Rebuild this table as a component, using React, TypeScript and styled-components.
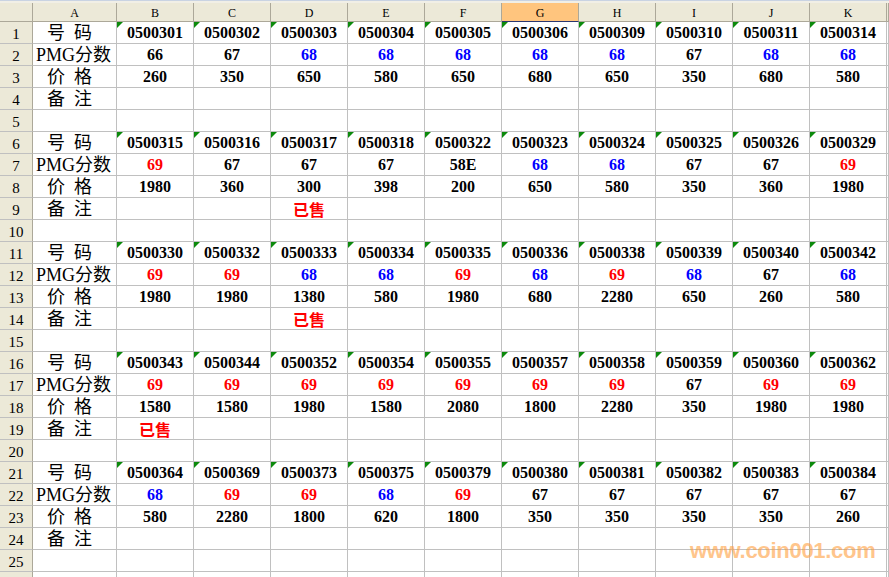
import React from "react";
import styled, { createGlobalStyle, css } from "styled-components";

const GlobalStyle = createGlobalStyle`
  html, body { margin: 0; padding: 0; background: #ffffff; overflow: hidden; }
  * { box-sizing: border-box; }
`;

const GRID = "#C0C0C0";
const HEAD_BG = "#ECE9D8";
const HEAD_LINE = "#ACA899";
const SERIF = `"Liberation Serif", "Noto Sans CJK SC", serif`;

const Sheet = styled.div`
  position: relative;
  width: 889px;
  height: 577px;
  overflow: hidden;
  background: #ffffff;
`;

const TopStrip = styled.div`
  height: 3px;
  background: #f1efe6;
  border-top: 1px solid #c9d3e2;
`;

const Grid = styled.div`
  display: grid;
  grid-template-columns: 33px 84px repeat(10, 77px) 1fr;
  grid-template-rows: 19px;
  grid-auto-rows: 22px;
`;

const Corner = styled.div`
  background: ${HEAD_BG};
  border-right: 1px solid ${HEAD_LINE};
  border-bottom: 1px solid ${HEAD_LINE};
`;

const ColHead = styled.div<{ $active?: boolean }>`
  background: ${(p) => (p.$active ? "#FFC57E" : HEAD_BG)};
  border-right: 1px solid ${HEAD_LINE};
  border-bottom: 1px solid ${(p) => (p.$active ? "#2B3670" : HEAD_LINE)};
  font-family: ${SERIF};
  font-size: 12px;
  line-height: 16px;
  padding-top: 2px;
  text-align: center;
  color: #000;
  overflow: hidden;
`;

const RowHead = styled.div`
  background: ${HEAD_BG};
  border-right: 1px solid ${HEAD_LINE};
  border-bottom: 1px solid ${GRID};
  font-family: ${SERIF};
  font-size: 15px;
  line-height: 18px;
  padding-top: 3px;
  text-align: center;
  color: #000;
  overflow: hidden;
`;

const BaseCell = styled.div`
  position: relative;
  border-right: 1px solid ${GRID};
  border-bottom: 1px solid ${GRID};
  overflow: hidden;
  white-space: pre;
`;

const LabelCell = styled(BaseCell)<{ $indent: number }>`
  font-family: ${SERIF};
  font-size: 18px;
  line-height: 20px;
  padding-top: 1px;
  padding-left: ${(p) => p.$indent}px;
  color: #000;
`;

const flagMark = css`
  &::before {
    content: "";
    position: absolute;
    left: 0;
    top: 0;
    width: 0;
    height: 0;
    border-top: 6px solid #0C8A0C;
    border-right: 6px solid transparent;
  }
`;

const DataCell = styled(BaseCell)<{ $tone: string; $flag?: boolean; $cjk?: boolean }>`
  font-family: ${(p) => (p.$cjk ? `"Noto Sans CJK SC", sans-serif` : SERIF)};
  font-weight: bold;
  font-size: 16px;
  line-height: ${(p) => (p.$cjk ? "20px" : "21px")};
  padding-top: ${(p) => (p.$cjk ? "1px" : "0")};
  text-align: center;
  color: ${(p) => p.$tone};
  ${(p) => p.$flag && flagMark}
`;

const Watermark = styled.div`
  position: absolute;
  left: 690px;
  top: 540px;
  font-family: "Liberation Sans", Arial, sans-serif;
  font-weight: bold;
  font-size: 22px;
  line-height: 22px;
  letter-spacing: -0.3px;
  color: #ff9f40;
  opacity: 0.6;
  pointer-events: none;
  white-space: nowrap;
`;

const COLOR: Record<string, string> = { r: "#FF0000", b: "#0000FF", k: "#000000" };

type Block = {
  codes: string[];
  pmg: string[];
  tones: string;
  prices: string[];
  notes: string[];
};

const blocks: Block[] = [
  {
    codes: ["0500301", "0500302", "0500303", "0500304", "0500305", "0500306", "0500309", "0500310", "0500311", "0500314"],
    pmg: ["66", "67", "68", "68", "68", "68", "68", "67", "68", "68"],
    tones: "kkbbbbbkbb",
    prices: ["260", "350", "650", "580", "650", "680", "650", "350", "680", "580"],
    notes: ["", "", "", "", "", "", "", "", "", ""],
  },
  {
    codes: ["0500315", "0500316", "0500317", "0500318", "0500322", "0500323", "0500324", "0500325", "0500326", "0500329"],
    pmg: ["69", "67", "67", "67", "58E", "68", "68", "67", "67", "69"],
    tones: "rkkkkbbkkr",
    prices: ["1980", "360", "300", "398", "200", "650", "580", "350", "360", "1980"],
    notes: ["", "", "已售", "", "", "", "", "", "", ""],
  },
  {
    codes: ["0500330", "0500332", "0500333", "0500334", "0500335", "0500336", "0500338", "0500339", "0500340", "0500342"],
    pmg: ["69", "69", "68", "68", "69", "68", "69", "68", "67", "68"],
    tones: "rrbbrbrbkb",
    prices: ["1980", "1980", "1380", "580", "1980", "680", "2280", "650", "260", "580"],
    notes: ["", "", "已售", "", "", "", "", "", "", ""],
  },
  {
    codes: ["0500343", "0500344", "0500352", "0500354", "0500355", "0500357", "0500358", "0500359", "0500360", "0500362"],
    pmg: ["69", "69", "69", "69", "69", "69", "69", "67", "69", "69"],
    tones: "rrrrrrrkrr",
    prices: ["1580", "1580", "1980", "1580", "2080", "1800", "2280", "350", "1980", "1980"],
    notes: ["已售", "", "", "", "", "", "", "", "", ""],
  },
  {
    codes: ["0500364", "0500369", "0500373", "0500375", "0500379", "0500380", "0500381", "0500382", "0500383", "0500384"],
    pmg: ["68", "69", "69", "68", "69", "67", "67", "67", "67", "67"],
    tones: "brrbrkkkkk",
    prices: ["580", "2280", "1800", "620", "1800", "350", "350", "350", "350", "260"],
    notes: ["", "", "", "", "", "", "", "", "", ""],
  },
];

const LETTERS = ["A", "B", "C", "D", "E", "F", "G", "H", "I", "J", "K", ""];
const LABELS: { text: string; indent: number }[] = [
  { text: "号  码", indent: 14 },
  { text: "PMG分数", indent: 3 },
  { text: "价  格", indent: 14 },
  { text: "备  注", indent: 14 },
  { text: "", indent: 0 },
];

function renderRow(r: number) {
  const blockIdx = Math.floor((r - 1) / 5);
  const kind = (r - 1) % 5;
  const block = blocks[blockIdx];
  const cells: React.ReactNode[] = [];
  cells.push(<RowHead key="h">{r <= 25 ? r : ""}</RowHead>);
  const label = block ? LABELS[kind] : { text: "", indent: 0 };
  cells.push(
    <LabelCell key="a" $indent={label.indent}>
      {label.text}
    </LabelCell>
  );
  for (let c = 0; c < 10; c++) {
    let text = "";
    let tone = "#000000";
    let flag = false;
    let cjk = false;
    if (block) {
      if (kind === 0) {
        text = block.codes[c];
        flag = true;
      } else if (kind === 1) {
        text = block.pmg[c];
        tone = COLOR[block.tones[c]];
      } else if (kind === 2) {
        text = block.prices[c];
      } else if (kind === 3) {
        text = block.notes[c];
        tone = "#FF0000";
        cjk = true;
      }
    }
    cells.push(
      <DataCell key={c} $tone={tone} $flag={flag} $cjk={cjk}>
        {text}
      </DataCell>
    );
  }
  cells.push(<DataCell key="l" $tone="#000" />);
  return cells;
}

export default function App() {
  const rows: React.ReactNode[] = [];
  for (let r = 1; r <= 26; r++) rows.push(...renderRow(r));
  return (
    <>
      <GlobalStyle />
      <Sheet>
        <TopStrip />
        <Grid>
          <Corner />
          {LETTERS.map((l, i) => (
            <ColHead key={i} $active={l === "G"}>
              {l}
            </ColHead>
          ))}
          {rows}
        </Grid>
        <Watermark>www.coin001.com</Watermark>
      </Sheet>
    </>
  );
}
